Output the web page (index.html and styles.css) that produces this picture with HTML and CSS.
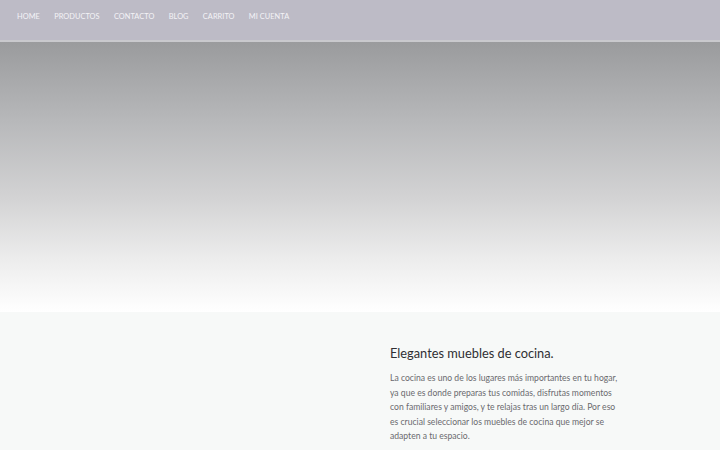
FILE: index.html
```html
<!DOCTYPE html>
<html lang="es">
<head>
<meta charset="utf-8">
<title>Muebles de cocina</title>
<link rel="stylesheet" href="styles.css">
</head>
<body>
<header class="topbar">
  <nav class="menu">
    <a class="menu-link" href="#">HOME</a>
    <a class="menu-link" href="#">PRODUCTOS</a>
    <a class="menu-link" href="#">CONTACTO</a>
    <a class="menu-link" href="#">BLOG</a>
    <a class="menu-link" href="#">CARRITO</a>
    <a class="menu-link" href="#">MI CUENTA</a>
  </nav>
</header>
<section class="hero"></section>
<section class="feature">
  <div class="feature-media"></div>
  <div class="feature-text">
    <h2 class="feature-title">Elegantes muebles de cocina.</h2>
    <p class="feature-body">La cocina es uno de los lugares más importantes en tu hogar, ya que es donde preparas tus comidas, disfrutas momentos con familiares y amigos, y te relajas tras un largo día. Por eso es crucial seleccionar los muebles de cocina que mejor se adapten a tu espacio.</p>
  </div>
</section>
</body>
</html>
```
FILE: styles.css
```css
html, body {
  margin: 0;
  padding: 0;
}

body {
  font-family: "Lato", "Open Sans", sans-serif;
  background: #f7f9f8;
  height: 450px;
  overflow: hidden;
}

.topbar {
  height: 40px;
  background: #bdbbc6;
  border-bottom: 2px solid #c9c9cd;
}

.menu {
  display: flex;
  gap: 14.3px;
  padding: 11px 0 0 17px;
}

.menu-link {
  color: #f4f3f7;
  text-decoration: none;
  font-size: 7.4px;
  line-height: 12px;
  letter-spacing: 0.05px;
}

.hero {
  height: 270px;
  background: linear-gradient(to bottom, #9a9b9d 0%, #b8b9bb 30%, #d3d3d4 58%, #ececec 80%, #ffffff 100%);
}

.feature {
  display: grid;
  grid-template-columns: 390px 1fr;
}

.feature-text {
  padding: 31px 100px 0 0;
}

.feature-title {
  margin: 0 0 8px;
  font-weight: 400;
  font-size: 12.8px;
  line-height: 20px;
  color: #2f2f33;
}

.feature-body {
  margin: 0;
  font-size: 8.6px;
  line-height: 14.5px;
  color: #6a6a6e;
}
```
